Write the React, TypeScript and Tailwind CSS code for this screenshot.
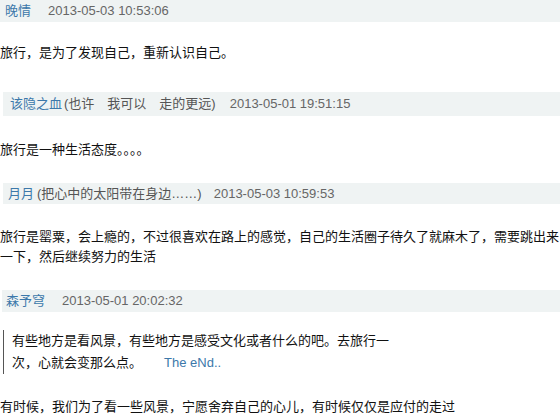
export default function App() {
  const font = { fontFamily: '"Liberation Sans", "Noto Sans CJK SC", sans-serif' };
  return (
    <div className="w-[560px] h-[420px] overflow-hidden bg-white text-[13px] text-[#111]" style={font}>
      {/* comment 1 */}
      <div className="h-[22px] bg-[#eff3f3] flex items-center pl-[5px]">
        <span className="text-[#3c78aa]">晚情</span>
        <span className="ml-[17px] text-[#666]">2013-05-03 10:53:06</span>
      </div>
      <p className="mt-[21px] leading-[20px]">旅行，是为了发现自己，重新认识自己。</p>

      {/* comment 2 */}
      <div className="mt-[29px] ml-[3px] h-[24px] bg-[#eff3f3] flex items-center pl-[7px]">
        <span className="text-[#3c78aa]">该隐之血</span>
        <span className="ml-[2px] text-[#555]">(也许　我可以　走的更远)</span>
        <span className="ml-[14px] text-[#666]">2013-05-01 19:51:15</span>
      </div>
      <p className="mt-[24px] leading-[20px]">旅行是一种生活态度。。。。</p>

      {/* comment 3 */}
      <div className="mt-[23px] ml-[3px] h-[21px] bg-[#eff3f3] flex items-center pl-[5px]">
        <span className="text-[#3c78aa]">月月</span>
        <span className="ml-[3px] text-[#555]">(把心中的太阳带在身边……)</span>
        <span className="ml-[12px] text-[#666]">2013-05-03 10:59:53</span>
      </div>
      <p className="mt-[23px] leading-[20px] whitespace-nowrap">
        旅行是罂粟，会上瘾的，不过很喜欢在路上的感觉，自己的生活圈子待久了就麻木了，需要跳出来
        <br />
        一下，然后继续努力的生活
      </p>

      {/* comment 4 */}
      <div className="mt-[23px] ml-[2px] h-[22px] bg-[#eff3f3] flex items-center pl-[4px]">
        <span className="text-[#3c78aa]">森予穹</span>
        <span className="ml-[17px] text-[#666]">2013-05-01 20:02:32</span>
      </div>
      <blockquote className="mt-[18px] ml-[3px] border-l border-[#555] pl-[8px] leading-[22px]">
        有些地方是看风景，有些地方是感受文化或者什么的吧。去旅行一
        <br />
        次，心就会变那么点。
        <span className="ml-[22px] text-[#3c78aa]">The eNd..</span>
      </blockquote>
      <p className="mt-[23px] leading-[20px]">有时候，我们为了看一些风景，宁愿舍弃自己的心儿，有时候仅仅是应付的走过</p>
    </div>
  );
}
